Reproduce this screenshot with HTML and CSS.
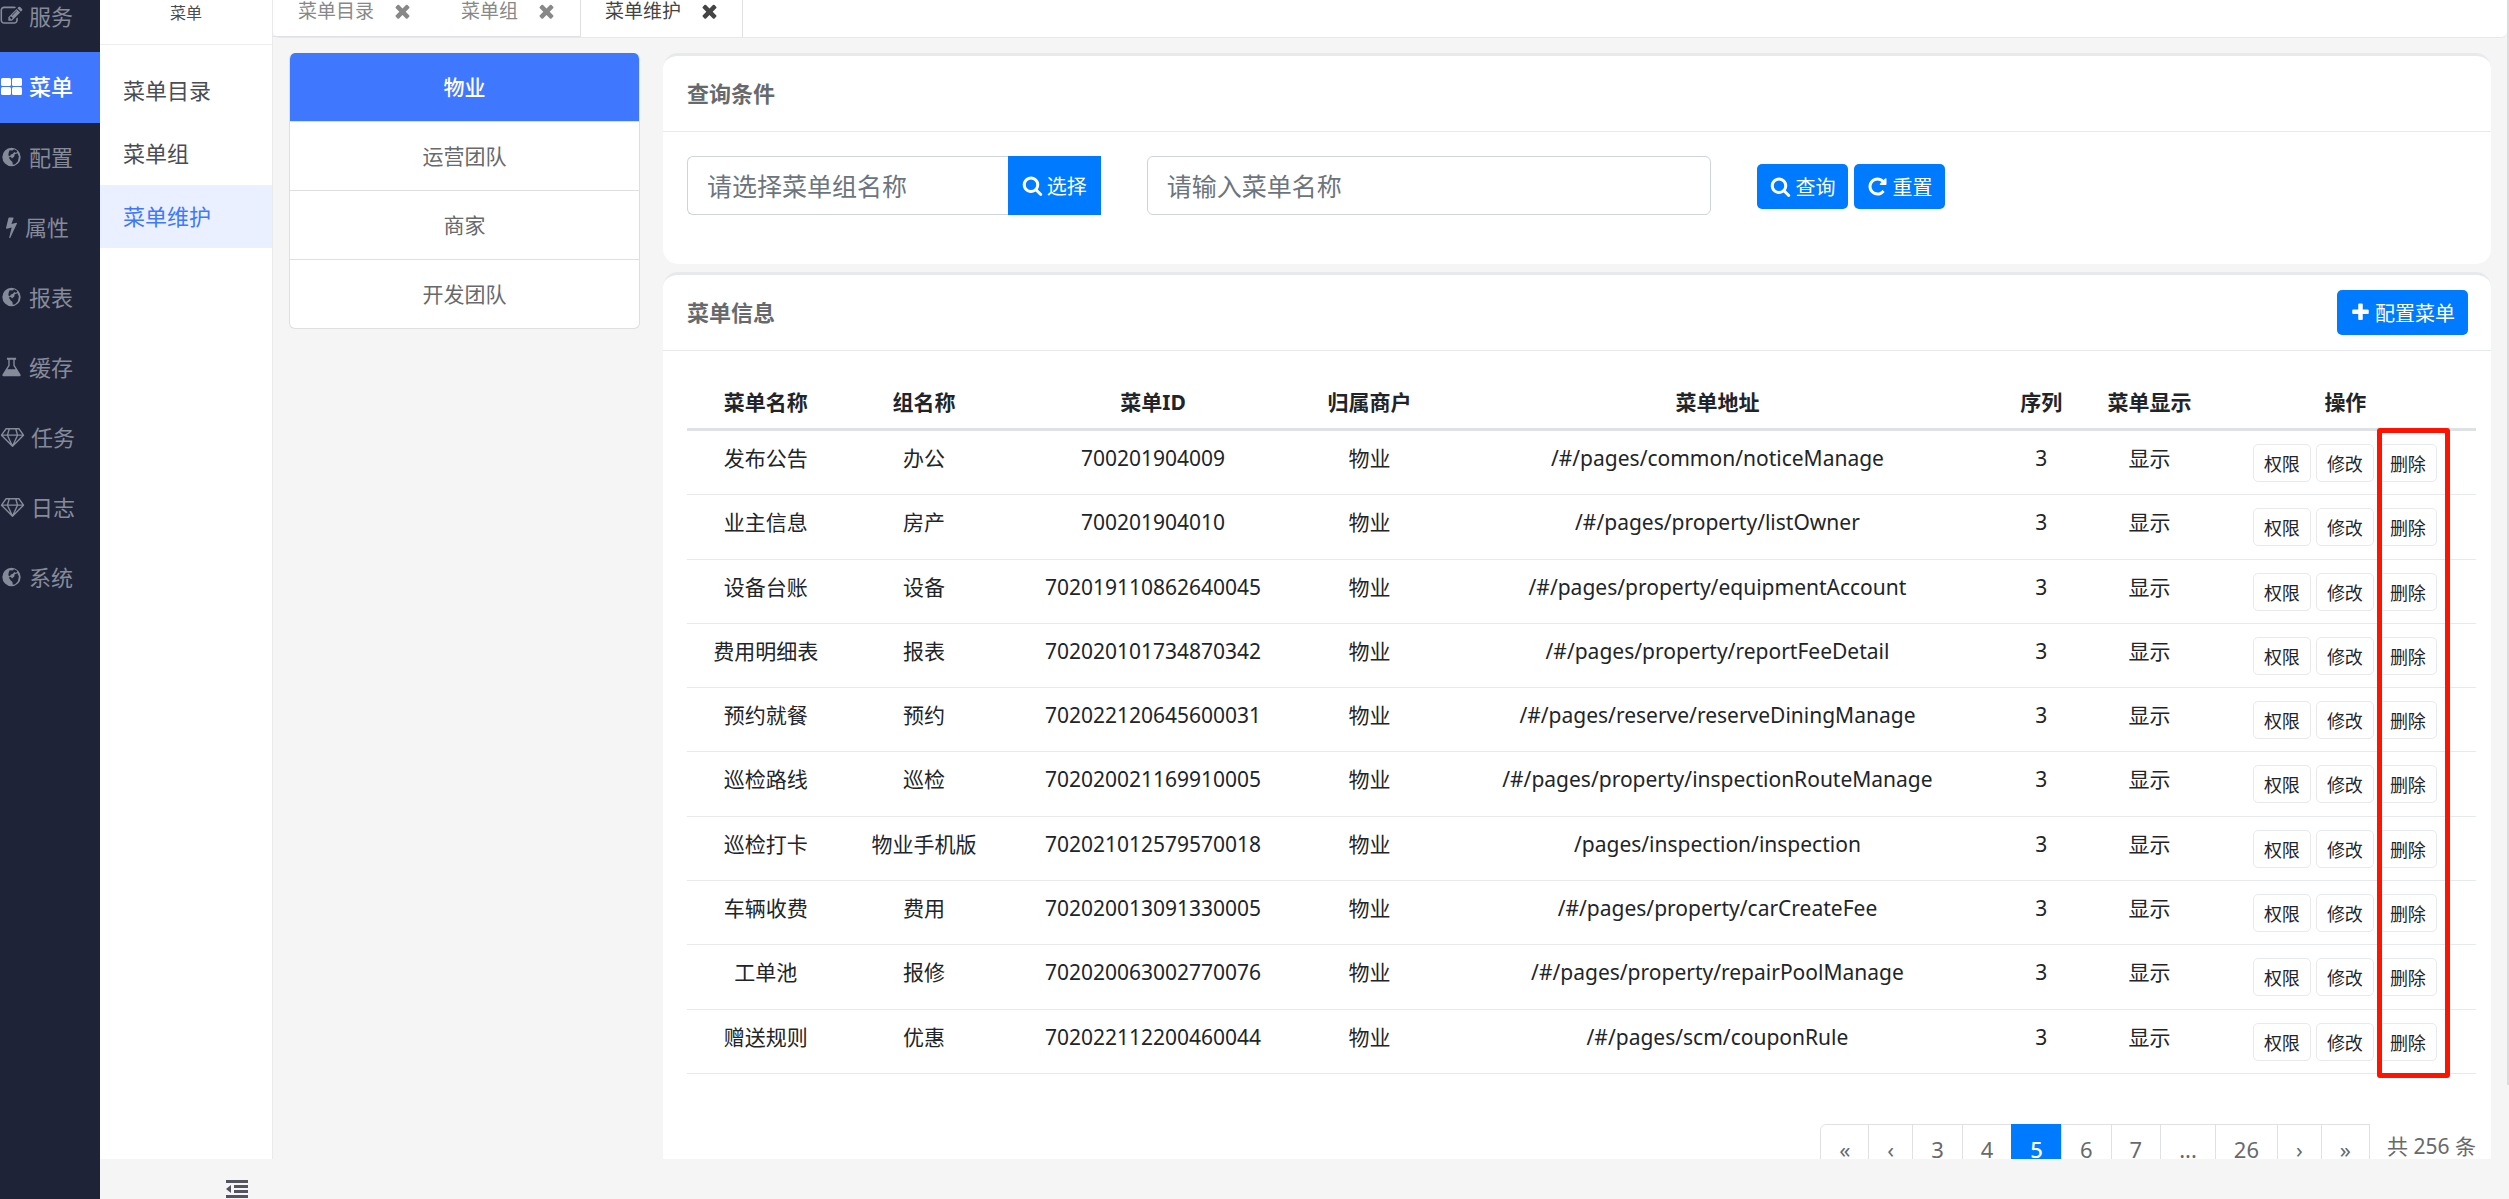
FILE: index.html
```html
<!DOCTYPE html>
<html lang="zh-CN">
<head>
  <meta charset="utf-8">
  <title>菜单维护</title>
  <link rel="stylesheet" href="styles.css">
</head>
<body>
  <!-- icon sprite -->
  <svg class="sprite" aria-hidden="true">
    <symbol id="i-edit" viewBox="0 0 1792 1792"><path d="M888 1184l116-116-152-152-116 116v56h96v96h56zm440-720q-16-16-33 1l-350 350q-17 17-1 33t33-1l350-350q17-17 1-33zm80 594v190q0 119-84.5 203.5t-203.5 84.5h-832q-119 0-203.5-84.5t-84.5-203.5v-832q0-119 84.5-203.5t203.5-84.5h832q63 0 117 25 15 7 18 23 3 17-9 29l-49 49q-14 14-32 8-23-6-45-6h-832q-66 0-113 47t-47 113v832q0 66 47 113t113 47h832q66 0 113-47t47-113v-126q0-13 9-22l64-64q15-15 35-7t20 29zm-96-738l288 288-672 672h-288v-288zm444 132l-92 92-288-288 92-92q28-28 68-28t68 28l152 152q28 28 28 68t-28 68z"/></symbol>
    <symbol id="i-th" viewBox="0 0 23 22"><rect x="1" y="2" width="10" height="8" rx="1.5"/><rect x="12" y="2" width="10" height="8" rx="1.5"/><rect x="1" y="11" width="10" height="8" rx="1.5"/><rect x="12" y="11" width="10" height="8" rx="1.5"/></symbol>
    <symbol id="i-globe" viewBox="0 0 24 24"><path fill-rule="evenodd" d="M12 2a10 10 0 1 0 0 20a10 10 0 1 0 0-20zM10 4.5l3 .5 2-1.5 3.500 2-1.500 2-2-1-1.500 2-2.500 1-.5 2-2-1.500.5-3zM9 12.500l2.500-.5 1 1.500 2.500-2 .5-2.500 3-1 1.500 3.500-1 5-3 3.500-2.500.5-.5-3-2-2z"/></symbol>
    <symbol id="i-bolt" viewBox="0 0 1792 1792"><path d="M1333 566q18 20 7 44l-540 1157q-13 25-42 25-4 0-14-2-17-5-25.500-19t-4.500-30l197-808-406 101q-4 1-12 1-18 0-31-11-18-15-13-39l201-825q4-14 16-23t28-9h328q19 0 32 12.500t13 29.500q0 8-5 18l-171 463 396-98q8-2 12-2 19 0 34 15z"/></symbol>
    <symbol id="i-flask" viewBox="0 0 24 24"><path fill-rule="evenodd" d="M7 2h10v2h-1.500v6l6 9.500q1.500 2.500-1.500 2.500h-16q-3 0-1.500-2.500l6-9.500v-6h-1.500zM10 4v6.500l-2.500 4h9l-2.500-4v-6.500z"/></symbol>
    <symbol id="i-diamond" viewBox="0 0 26 24"><path d="M6 3h14l5 7-12 12-12-12zM1 10h24M9.500 3l-2 7 5.500 12 5.500-12-2-7" fill="none" stroke="currentColor" stroke-width="1.500" stroke-linejoin="round"/></symbol>
    <symbol id="i-times" viewBox="0 0 1792 1792"><path d="M1490 1322q0 40-28 68l-136 136q-28 28-68 28t-68-28l-294-294-294 294q-28 28-68 28t-68-28l-136-136q-28-28-28-68t28-68l294-294-294-294q-28-28-28-68t28-68l136-136q28-28 68-28t68 28l294 294 294-294q28-28 68-28t68 28l136 136q28 28 28 68t-28 68l-294 294 294 294q28 28 28 68z"/></symbol>
    <symbol id="i-search" viewBox="0 0 1792 1792"><path d="M1216 832q0-185-131.500-316.500t-316.500-131.500-316.500 131.500-131.500 316.500 131.500 316.500 316.500 131.500 316.500-131.500 131.500-316.500zm512 832q0 52-38 90t-90 38q-54 0-90-38l-343-342q-179 124-399 124-143 0-273.500-55.500t-225-150-150-225-55.500-273.500 55.500-273.500 150-225 225-150 273.500-55.500 273.500 55.500 225 150 150 225 55.500 273.500q0 220-124 399l343 343q37 37 37 90z"/></symbol>
    <symbol id="i-repeat" viewBox="0 0 1792 1792"><path d="M1664 256v448q0 26-19 45t-45 19h-448q-42 0-59-40-17-39 14-69l138-138q-148-137-349-137-104 0-198.500 40.500t-163.500 109.500-109.500 163.500-40.500 198.500 40.500 198.500 109.500 163.500 163.500 109.500 198.500 40.500q119 0 225-52t179-147q7-10 23-12 15 0 25 9l137 138q9 8 9.500 20.500t-7.500 22.500q-109 132-264 204.500t-327 72.500q-156 0-298-61t-245-164-164-245-61-298 61-298 164-245 245-164 298-61q147 0 284.500 55.500t244.500 156.500l130-129q29-31 70-14 39 17 39 59z"/></symbol>
    <symbol id="i-plus" viewBox="0 0 1792 1792"><path d="M1600 736v192q0 40-28 68t-68 28h-416v416q0 40-28 68t-68 28h-192q-40 0-68-28t-28-68v-416h-416q-40 0-68-28t-28-68v-192q0-40 28-68t68-28h416v-416q0-40 28-68t68-28h192q40 0 68 28t28 68v416h416q40 0 68 28t28 68z"/></symbol>
    <symbol id="i-outdent" viewBox="0 0 22 18"><path d="M0 0h22v3H0zM8 5h14v3H8zM8 10h14v3H8zM0 15h22v3H0zM5 5v8L0 9z"/></symbol>
  </svg>

  <nav class="sidebar">
    <a href="#"><svg class="icon"><use href="#i-edit"/></svg>服务</a>
    <a href="#" class="active"><svg class="icon"><use href="#i-th"/></svg>菜单</a>
    <a href="#"><svg class="icon"><use href="#i-globe"/></svg>配置</a>
    <a href="#"><svg class="icon narrow"><use href="#i-bolt"/></svg>属性</a>
    <a href="#"><svg class="icon"><use href="#i-globe"/></svg>报表</a>
    <a href="#"><svg class="icon"><use href="#i-flask"/></svg>缓存</a>
    <a href="#"><svg class="icon wide"><use href="#i-diamond"/></svg>任务</a>
    <a href="#"><svg class="icon wide"><use href="#i-diamond"/></svg>日志</a>
    <a href="#"><svg class="icon"><use href="#i-globe"/></svg>系统</a>
  </nav>

  <div class="page">
    <div class="workspace">
      <nav class="submenu">
        <div class="submenu-title">菜单</div>
        <a href="#">菜单目录</a>
        <a href="#">菜单组</a>
        <a href="#" class="active">菜单维护</a>
      </nav>

      <main class="main">
        <div class="tabs">
          <div class="tab"><a href="#">菜单目录</a><button type="button" aria-label="关闭"><svg><use href="#i-times"/></svg></button></div>
          <div class="tab"><a href="#">菜单组</a><button type="button" aria-label="关闭"><svg><use href="#i-times"/></svg></button></div>
          <div class="tab active"><a href="#">菜单维护</a><button type="button" aria-label="关闭"><svg><use href="#i-times"/></svg></button></div>
        </div>

        <div class="content">
          <ul class="list-group">
            <li class="active">物业</li>
            <li>运营团队</li>
            <li>商家</li>
            <li>开发团队</li>
          </ul>

          <div class="panels">
            <section class="card">
              <div class="card-header"><h5>查询条件</h5></div>
              <form class="search">
                <div class="input-group">
                  <input type="text" class="form-control" placeholder="请选择菜单组名称" aria-label="菜单组名称">
                  <button type="button" class="btn"><svg><use href="#i-search"/></svg>选择</button>
                </div>
                <input type="text" class="form-control" placeholder="请输入菜单名称" aria-label="菜单名称">
                <div class="actions">
                  <button type="button" class="btn"><svg><use href="#i-search"/></svg>查询</button>
                  <button type="button" class="btn"><svg><use href="#i-repeat"/></svg>重置</button>
                </div>
              </form>
            </section>

            <section class="card">
              <div class="card-header">
                <h5>菜单信息</h5>
                <button type="button" class="btn"><svg><use href="#i-plus"/></svg>配置菜单</button>
              </div>
              <div class="card-body">
                <div class="table-wrap">
                  <table class="table">
                    <thead>
                      <tr>
                        <th class="c-name">菜单名称</th>
                        <th class="c-group">组名称</th>
                        <th class="c-id">菜单ID</th>
                        <th class="c-store">归属商户</th>
                        <th class="c-url">菜单地址</th>
                        <th class="c-seq">序列</th>
                        <th class="c-show">菜单显示</th>
                        <th class="c-op">操作</th>
                      </tr>
                    </thead>
                    <tbody>
                      <tr><td>发布公告</td><td>办公</td><td>700201904009</td><td>物业</td><td>/#/pages/common/noticeManage</td><td>3</td><td>显示</td><td class="ops"><button type="button">权限</button><button type="button">修改</button><button type="button">删除</button></td></tr>
                      <tr><td>业主信息</td><td>房产</td><td>700201904010</td><td>物业</td><td>/#/pages/property/listOwner</td><td>3</td><td>显示</td><td class="ops"><button type="button">权限</button><button type="button">修改</button><button type="button">删除</button></td></tr>
                      <tr><td>设备台账</td><td>设备</td><td>702019110862640045</td><td>物业</td><td>/#/pages/property/equipmentAccount</td><td>3</td><td>显示</td><td class="ops"><button type="button">权限</button><button type="button">修改</button><button type="button">删除</button></td></tr>
                      <tr><td>费用明细表</td><td>报表</td><td>702020101734870342</td><td>物业</td><td>/#/pages/property/reportFeeDetail</td><td>3</td><td>显示</td><td class="ops"><button type="button">权限</button><button type="button">修改</button><button type="button">删除</button></td></tr>
                      <tr><td>预约就餐</td><td>预约</td><td>702022120645600031</td><td>物业</td><td>/#/pages/reserve/reserveDiningManage</td><td>3</td><td>显示</td><td class="ops"><button type="button">权限</button><button type="button">修改</button><button type="button">删除</button></td></tr>
                      <tr><td>巡检路线</td><td>巡检</td><td>702020021169910005</td><td>物业</td><td>/#/pages/property/inspectionRouteManage</td><td>3</td><td>显示</td><td class="ops"><button type="button">权限</button><button type="button">修改</button><button type="button">删除</button></td></tr>
                      <tr><td>巡检打卡</td><td>物业手机版</td><td>702021012579570018</td><td>物业</td><td>/pages/inspection/inspection</td><td>3</td><td>显示</td><td class="ops"><button type="button">权限</button><button type="button">修改</button><button type="button">删除</button></td></tr>
                      <tr><td>车辆收费</td><td>费用</td><td>702020013091330005</td><td>物业</td><td>/#/pages/property/carCreateFee</td><td>3</td><td>显示</td><td class="ops"><button type="button">权限</button><button type="button">修改</button><button type="button">删除</button></td></tr>
                      <tr><td>工单池</td><td>报修</td><td>702020063002770076</td><td>物业</td><td>/#/pages/property/repairPoolManage</td><td>3</td><td>显示</td><td class="ops"><button type="button">权限</button><button type="button">修改</button><button type="button">删除</button></td></tr>
                      <tr><td>赠送规则</td><td>优惠</td><td>702022112200460044</td><td>物业</td><td>/#/pages/scm/couponRule</td><td>3</td><td>显示</td><td class="ops"><button type="button">权限</button><button type="button">修改</button><button type="button">删除</button></td></tr>
                    </tbody>
                  </table>
                  <div class="marker"></div>
                </div>

                <div class="table-footer">
                  <ul class="pagination">
                    <li><a href="#">«</a></li>
                    <li><a href="#">‹</a></li>
                    <li><a href="#">3</a></li>
                    <li><a href="#">4</a></li>
                    <li class="active"><a href="#">5</a></li>
                    <li><a href="#">6</a></li>
                    <li><a href="#">7</a></li>
                    <li><a href="#">...</a></li>
                    <li><a href="#">26</a></li>
                    <li><a href="#">›</a></li>
                    <li><a href="#">»</a></li>
                  </ul>
                  <span class="total">共 256 条</span>
                </div>
              </div>
            </section>
          </div>
        </div>
      </main>
    </div>

    <footer class="bottom-bar">
      <button type="button" aria-label="收起菜单"><svg><use href="#i-outdent"/></svg></button>
    </footer>
  </div>
  <div class="scroll-thumb"></div>
</body>
</html>
```
FILE: styles.css
```css
:root {
  --primary: #007bff;
  --accent: #4077ff;
  --dark: #1f2337;
  --bg: #f5f5f5;
  --text: #212529;
  --muted: #676a6c;
  --line: #e7eaec;
  --line-dark: #dee2e6;
}

* {
  box-sizing: border-box;
}

body {
  margin: 0;
  height: 100vh;
  display: flex;
  overflow: hidden;
  background: var(--bg);
  color: var(--muted);
  font-family: "Noto Sans", "Noto Sans CJK SC", sans-serif;
  font-size: 21px;
  line-height: 31px;
}

a {
  color: inherit;
  text-decoration: none;
}

button,
input {
  font-family: inherit;
}

svg {
  fill: currentColor;
}

.sprite {
  position: absolute;
  width: 0;
  height: 0;
}

/* dark sidebar, scrolled down a little */
.sidebar {
  flex: none;
  width: 100px;
  margin-top: -18px;
  background: var(--dark);
  color: #868b9a;
  font-size: 22px;
}

.sidebar a {
  display: flex;
  align-items: center;
  gap: 6px;
  height: 70px;
  padding-bottom: 2px;
}

.sidebar a.active {
  height: 71px;
  background: var(--accent);
  color: #fff;
  font-weight: 500;
}

.icon {
  flex: none;
  width: 23px;
  height: 22px;
}

.icon.narrow {
  margin-right: -4px;
}

.icon.wide {
  width: 25px;
}

.page {
  flex: 1;
  min-width: 0;
  display: flex;
  flex-direction: column;
}

.workspace {
  flex: 1;
  min-height: 0;
  display: flex;
  overflow: hidden;
}

.submenu {
  flex: none;
  width: 173px;
  background: #fff;
  border-right: 1px solid #eaeaea;
  color: #4a4d52;
  font-size: 22px;
}

.submenu-title {
  height: 45px;
  margin-bottom: 14px;
  border-bottom: 1px solid #eee;
  font-size: 16px;
  line-height: 26px;
  text-align: center;
}

.submenu a {
  display: block;
  padding: 0 23px;
  line-height: 63px;
}

.submenu a.active {
  background: #eaf0ff;
  color: var(--accent);
}

.main {
  flex: 1;
  min-width: 0;
  padding-right: 2px;
}

.tabs {
  display: flex;
  height: 38px;
  background: #fff;
  border-bottom: 1px solid #e8e8e8;
  border-radius: 0 0 6px 6px;
  font-size: 19px;
  line-height: 22px;
  color: #888;
}

.tab {
  display: flex;
  gap: 18px;
  height: 37px;
  padding: 0 23px 0 25px;
  border-bottom: 1px solid var(--line-dark);
}

.tab.active {
  border: solid var(--line-dark);
  border-width: 0 1px;
  padding: 0 22px 0 24px;
  color: #444;
}

.tab button {
  width: 21px;
  height: 22px;
  padding: 0;
  border: 0;
  background: none;
  color: inherit;
}

.tab svg {
  display: block;
  width: 21px;
  height: 22px;
}

.content {
  display: flex;
  gap: 23px;
  padding: 15px 16px 0;
}

.list-group {
  flex: none;
  align-self: flex-start;
  width: 19%;
  max-width: 351px;
  margin: 0;
  padding: 0;
  list-style: none;
  background: #fff;
  border: 1px solid #dfdfdf;
  border-top: 0;
  border-radius: 6px;
  overflow: hidden;
  text-align: center;
}

.list-group li {
  height: 69px;
  line-height: 68px;
  border-bottom: 1px solid #dfdfdf;
}

.list-group li:last-child {
  height: 68px;
  border-bottom: 0;
}

.list-group li.active {
  background: var(--accent);
  color: #fff;
  font-weight: 500;
}

.panels {
  flex: 1;
  min-width: 0;
}

.card {
  margin-bottom: 8px;
  background: #fff;
  border-top: 3px solid var(--line);
  border-radius: 15px;
}

.card-header {
  display: flex;
  align-items: center;
  justify-content: space-between;
  height: 76px;
  padding: 0 23px 0 24px;
  border-bottom: 1px solid var(--line);
}

.card-header h5 {
  margin: 0;
  font-size: 22px;
  font-weight: 700;
}

.btn {
  display: inline-flex;
  align-items: center;
  justify-content: center;
  gap: 4px;
  height: 45px;
  padding: 0 13px;
  border: 0;
  border-radius: 5px;
  background: var(--primary);
  color: #fff;
  font-size: 20px;
}

.btn svg {
  width: 21px;
  height: 21px;
}

.search {
  display: grid;
  grid-template-columns: 414fr 565fr 710fr;
  column-gap: 46px;
  padding: 24px 24px 49px;
}

.form-control {
  width: 100%;
  min-width: 0;
  height: 59px;
  padding: 0 19px;
  border: 1px solid #ced4da;
  border-radius: 6px;
  background: #fff;
  font-size: 25px;
}

.form-control::placeholder {
  color: #6c757d;
  opacity: 1;
}

.input-group {
  display: flex;
}

.input-group .form-control {
  border-right: 0;
  border-radius: 6px 0 0 6px;
}

.input-group .btn {
  flex: none;
  height: 59px;
  padding: 0 14px;
  border-radius: 0;
}

.actions {
  display: flex;
  gap: 6px;
  padding-top: 8px;
}

.card-body {
  padding: 25px 15px 24px 24px;
}

.table-wrap {
  position: relative;
}

.table {
  width: 100%;
  height: 698px;
  table-layout: fixed;
  border-collapse: separate;
  border-spacing: 0;
  color: var(--text);
  text-align: center;
}

.table th {
  height: 55px;
  padding: 0;
  border-bottom: 3px solid var(--line-dark);
  font-weight: 700;
}

.table td {
  height: 64px;
  padding: 12px 0;
  border-bottom: 1px solid var(--line);
  vertical-align: top;
  white-space: nowrap;
}

.c-name { width: 8.8%; }
.c-group { width: 8.9%; }
.c-id { width: 16.7%; }
.c-store { width: 7.5%; }
.c-url { width: 31.4%; }
.c-seq { width: 4.8%; }
.c-show { width: 7.3%; }
.c-op { width: 14.6%; }

.ops button {
  height: 38px;
  margin: 1px 3px 0 2px;
  padding: 0 10px;
  border: 1px solid var(--line);
  border-radius: 5px;
  background: #fff;
  color: var(--text);
  font-size: 18px;
  vertical-align: top;
}

/* red frame round the delete column */
.marker {
  position: absolute;
  top: 52px;
  right: 26px;
  bottom: -4px;
  width: 73px;
  border: 5px solid #ff1200;
  border-radius: 3px;
  pointer-events: none;
}

.table-footer {
  display: flex;
  justify-content: flex-end;
  gap: 17px;
  margin-top: 50px;
  font-size: 21px;
}

.pagination {
  display: flex;
  margin: 0;
  padding: 0;
  list-style: none;
  font-size: 22px;
}

.pagination a {
  display: block;
  height: 53px;
  margin-left: -1px;
  padding: 0 18px;
  border: 1px solid var(--line-dark);
  line-height: 49px;
}

.pagination li:first-child a {
  border-radius: 6px 0 0 6px;
}

.pagination .active a {
  border-color: var(--primary);
  background: var(--primary);
  color: #fff;
  font-weight: 500;
}

.total {
  line-height: 45px;
}

.bottom-bar {
  flex: none;
  height: 40px;
  padding: 21px 0 0 126px;
}

.bottom-bar button {
  display: block;
  padding: 0;
  border: 0;
  background: none;
  color: #545360;
}

.bottom-bar svg {
  display: block;
  width: 22px;
  height: 18px;
}

/* thin page scrollbar */
.scroll-thumb {
  position: absolute;
  top: 0;
  right: 0;
  width: 2px;
  height: 90.5vh;
  background: #dcdcdc;
}
```
